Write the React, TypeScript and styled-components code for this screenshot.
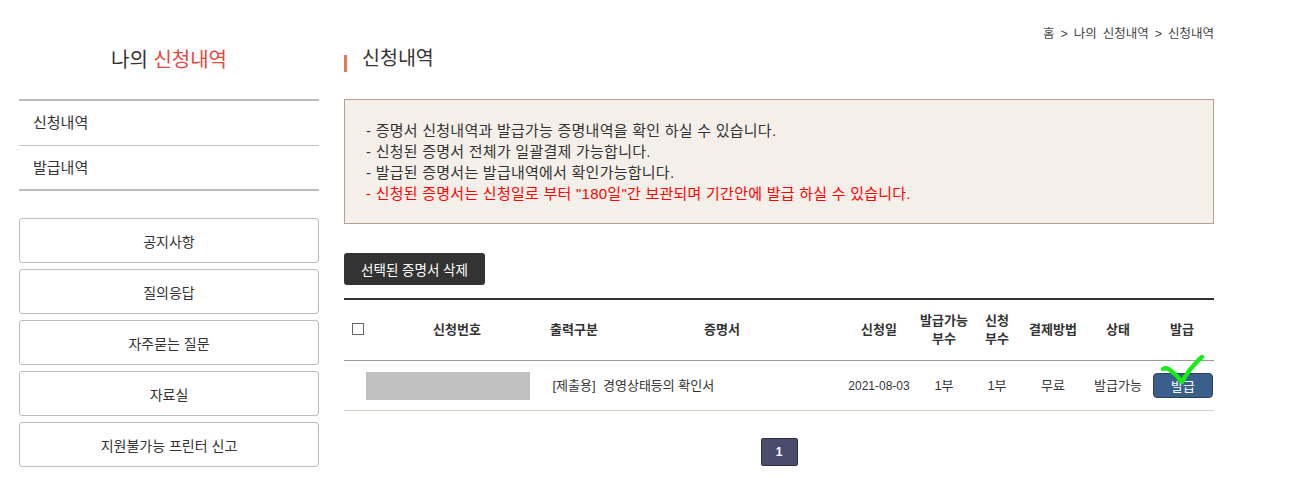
import React from "react";
import styled, { createGlobalStyle } from "styled-components";

const GlobalStyle = createGlobalStyle`
  html, body { margin: 0; padding: 0; background: #fff; }
  body {
    font-family: "Liberation Sans", "Noto Sans CJK KR", sans-serif;
    color: #333;
  }
  * { box-sizing: border-box; }
`;

const Page = styled.div`
  display: flex;
  gap: 25px;
  padding-left: 19px;
  width: 1298px;
`;

const Sidebar = styled.aside`
  width: 300px;
  flex: none;
`;

const SideTitle = styled.h2`
  margin: 0;
  height: 99px;
  padding-top: 47px;
  font-size: 20px;
  line-height: 26px;
  font-weight: 400;
  text-align: center;
  color: #333;
`;

const Accent = styled.span`
  color: #e5473c;
`;

const SideMenu = styled.ul`
  list-style: none;
  margin: 0;
  padding: 0;
  border-top: 2px solid #bbb;
  border-bottom: 2px solid #bbb;
`;

const SideItem = styled.li<{ $last?: boolean }>`
  height: ${(p) => (p.$last ? 43 : 45)}px;
  line-height: ${(p) => (p.$last ? 43 : 44)}px;
  padding-left: 14px;
  font-size: 15px;
  color: #333;
  border-bottom: ${(p) => (p.$last ? "none" : "1px solid #c4c4c4")};
`;

const LinkList = styled.div`
  display: flex;
  flex-direction: column;
  gap: 6px;
  margin-top: 27px;
`;

const LinkButton = styled.div`
  height: 45px;
  border: 1px solid #bbb;
  border-radius: 3px;
  display: flex;
  align-items: center;
  justify-content: center;
  font-size: 14px;
  color: #333;
`;

const Main = styled.main`
  width: 870px;
  flex: none;
`;

const Breadcrumb = styled.div`
  padding-top: 26px;
  font-size: 12.5px;
  line-height: 16px;
  text-align: right;
  color: #444;
  word-spacing: 2.5px;
`;

const TitleRow = styled.div`
  display: flex;
  align-items: flex-start;
  margin-top: 3px;
`;

const TitleBar = styled.span`
  width: 3px;
  height: 17px;
  margin-top: 10px;
  background: #e8735a;
  flex: none;
`;

const Title = styled.h3`
  margin: 0 0 0 15px;
  font-size: 19.5px;
  line-height: 26px;
  font-weight: 400;
  color: #333;
`;

const InfoBox = styled.div`
  margin-top: 27px;
  border: 1px solid #b9a08d;
  background: #f4efe9;
  padding: 20px 21px 19px;
`;

const InfoLine = styled.p<{ $warn?: boolean }>`
  margin: 0;
  font-size: 15px;
  letter-spacing: 0.25px;
  line-height: 21px;
  color: ${(p) => (p.$warn ? "#ff0000" : "#333")};
`;

const DeleteButton = styled.button`
  margin-top: 29px;
  width: 141px;
  height: 32px;
  border: none;
  border-radius: 3px;
  background: #333;
  color: #fff;
  font-family: inherit;
  font-size: 13.5px;
  padding: 0;
  cursor: pointer;
`;

const Table = styled.table`
  margin-top: 13px;
  width: 870px;
  table-layout: fixed;
  border-collapse: separate;
  border-spacing: 0;
`;

const Th = styled.th<{ $align?: string }>`
  height: 63px;
  padding: 0;
  border-top: 2px solid #333;
  border-bottom: 1px solid #999;
  font-size: 13px;
  line-height: 18px;
  font-weight: 700;
  color: #333;
  text-align: ${(p) => p.$align || "center"};
  vertical-align: middle;
`;

const Td = styled.td<{ $align?: string; $pad?: number; $latin?: boolean }>`
  position: relative;
  height: 50px;
  padding: 0 0 0 ${(p) => p.$pad || 0}px;
  border-bottom: 1px solid #d9d0c5;
  font-size: ${(p) => (p.$latin ? 12 : 13)}px;
  line-height: 18px;
  color: #333;
  text-align: ${(p) => p.$align || "center"};
  vertical-align: middle;
  white-space: nowrap;
`;

const CheckBox = styled.span`
  display: block;
  width: 12px;
  height: 12px;
  margin: -2px 0 0 8px;
  border: 1px solid #666;
  background: #fff;
`;

const Redacted = styled.div`
  width: 164px;
  height: 28px;
  background: #c0c0c0;
`;

const IssueButton = styled.button`
  width: 60px;
  height: 25px;
  margin-left: 3px;
  border: 1px solid #2b3f58;
  border-radius: 4px;
  background: #3a5f8b;
  color: #fff;
  font-family: inherit;
  font-size: 13px;
  padding: 0;
  display: block;
`;

const CheckMark = styled.svg`
  position: absolute;
  left: 5px;
  top: -10px;
  pointer-events: none;
`;

const Pagination = styled.div`
  display: flex;
  justify-content: center;
  margin-top: 27px;
`;

const PageButton = styled.span`
  width: 37px;
  height: 28px;
  display: flex;
  align-items: center;
  justify-content: center;
  background: #4a4c6e;
  border: 1px solid #2f3044;
  border-radius: 2px;
  color: #fff;
  font-weight: 700;
  font-size: 12px;
`;

const cols = [22, 182, 52, 244, 70, 60, 46, 66, 64, 64];

export default function App() {
  return (
    <>
      <GlobalStyle />
      <Page>
        <Sidebar>
          <SideTitle>
            나의 <Accent>신청내역</Accent>
          </SideTitle>
          <SideMenu>
            <SideItem>신청내역</SideItem>
            <SideItem $last>발급내역</SideItem>
          </SideMenu>
          <LinkList>
            <LinkButton>공지사항</LinkButton>
            <LinkButton>질의응답</LinkButton>
            <LinkButton>자주묻는 질문</LinkButton>
            <LinkButton>자료실</LinkButton>
            <LinkButton>지원불가능 프린터 신고</LinkButton>
          </LinkList>
        </Sidebar>
        <Main>
          <Breadcrumb>홈 &gt; 나의 신청내역 &gt; 신청내역</Breadcrumb>
          <TitleRow>
            <TitleBar />
            <Title>신청내역</Title>
          </TitleRow>
          <InfoBox>
            <InfoLine>- 증명서 신청내역과 발급가능 증명내역을 확인 하실 수 있습니다.</InfoLine>
            <InfoLine>- 신청된 증명서 전체가 일괄결제 가능합니다.</InfoLine>
            <InfoLine>- 발급된 증명서는 발급내역에서 확인가능합니다.</InfoLine>
            <InfoLine $warn>
              - 신청된 증명서는 신청일로 부터 "180일"간 보관되며 기간안에 발급 하실 수 있습니다.
            </InfoLine>
          </InfoBox>
          <DeleteButton>선택된 증명서 삭제</DeleteButton>
          <Table>
            <colgroup>
              {cols.map((w, i) => (
                <col key={i} style={{ width: w }} />
              ))}
            </colgroup>
            <thead>
              <tr>
                <Th $align="left">
                  <CheckBox />
                </Th>
                <Th>신청번호</Th>
                <Th>출력구분</Th>
                <Th>증명서</Th>
                <Th>신청일</Th>
                <Th>
                  발급가능
                  <br />
                  부수
                </Th>
                <Th>
                  신청
                  <br />
                  부수
                </Th>
                <Th>결제방법</Th>
                <Th>상태</Th>
                <Th>발급</Th>
              </tr>
            </thead>
            <tbody>
              <tr>
                <Td />
                <Td $align="left">
                  <Redacted />
                </Td>
                <Td>[제출용]</Td>
                <Td $align="left" $pad={3}>
                  경영상태등의 확인서
                </Td>
                <Td $latin>2021-08-03</Td>
                <Td>1부</Td>
                <Td>1부</Td>
                <Td>무료</Td>
                <Td>발급가능</Td>
                <Td>
                  <IssueButton>발급</IssueButton>
                  <CheckMark width="56" height="40" viewBox="0 0 56 40">
                    <path
                      d="M8 18 Q11 16 15 19 Q22 24 27 31 Q33 20 41 12 Q44 8 47 6"
                      fill="none"
                      stroke="#14ee14"
                      strokeWidth="4.5"
                      strokeLinecap="round"
                      strokeLinejoin="round"
                    />
                  </CheckMark>
                </Td>
              </tr>
            </tbody>
          </Table>
          <Pagination>
            <PageButton>1</PageButton>
          </Pagination>
        </Main>
      </Page>
    </>
  );
}
